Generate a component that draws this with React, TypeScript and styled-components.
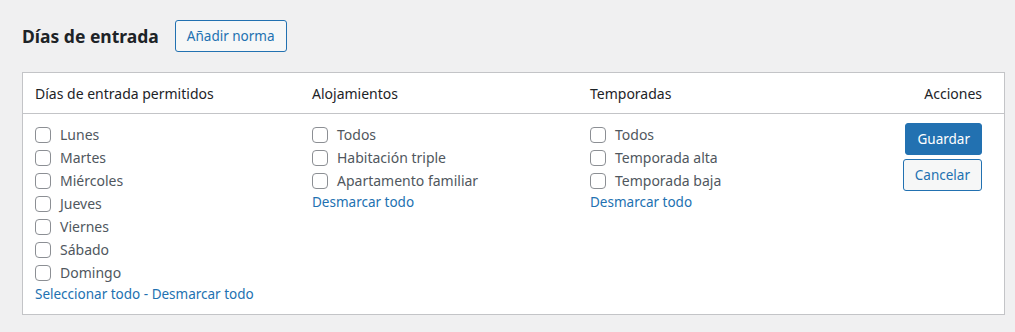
import React from "react";
import styled, { createGlobalStyle } from "styled-components";

const WP = {
  bg: "#f0f0f1",
  border: "#c3c4c7",
  blue: "#2271b1",
  text: "#1d2327",
  label: "#50575e",
  box: "#8c8f94",
  white: "#ffffff",
  light: "#f6f7f7",
};

const GlobalStyle = createGlobalStyle`
  html, body {
    margin: 0;
    background: ${WP.bg};
    font-family: "Noto Sans", "Open Sans", sans-serif;
    color: ${WP.text};
  }
`;

const Page = styled.div`
  padding: 20px 11px 0 22px;
`;

const TitleRow = styled.div`
  display: flex;
  align-items: center;
  gap: 16px;
  margin-bottom: 20px;
`;

const Title = styled.h2`
  margin: 0;
  font-size: 17.5px;
  font-weight: 700;
  color: ${WP.text};
`;

const Button = styled.button<{ $primary?: boolean }>`
  font-family: inherit;
  font-size: 13.5px;
  height: 32px;
  padding: 0 11px;
  border-radius: 3px;
  border: 1px solid ${WP.blue};
  background: ${(p) => (p.$primary ? WP.blue : WP.light)};
  color: ${(p) => (p.$primary ? WP.white : WP.blue)};
  cursor: pointer;
`;

const Table = styled.div`
  background: ${WP.white};
  border: 1px solid ${WP.border};
  box-sizing: border-box;
  width: 983px;
`;

const Row = styled.div<{ $head?: boolean }>`
  display: grid;
  grid-template-columns: 277px 278px 1fr 120px;
  padding: ${(p) => (p.$head ? "0 22px 0 12px" : "9px 22px 10px 12px")};
  height: ${(p) => (p.$head ? "40px" : "auto")};
  align-items: ${(p) => (p.$head ? "center" : "start")};
  border-bottom: ${(p) => (p.$head ? `1px solid ${WP.border}` : "none")};
`;

const HeadCell = styled.div<{ $right?: boolean }>`
  font-size: 14px;
  color: ${WP.text};
  text-align: ${(p) => (p.$right ? "right" : "left")};
`;

const Col = styled.div`
  display: flex;
  flex-direction: column;
`;

const Check = styled.label`
  display: flex;
  align-items: center;
  gap: 9px;
  height: 23px;
  font-size: 14px;
  color: ${WP.label};
`;

const Box = styled.span`
  width: 16px;
  height: 16px;
  box-sizing: border-box;
  border: 1px solid ${WP.box};
  border-radius: 4px;
  background: ${WP.white};
`;

const Links = styled.div`
  font-size: 13.5px;
  color: ${WP.blue};
  line-height: 20px;
  margin-top: 0;
`;

const Link = styled.a`
  color: ${WP.blue};
  text-decoration: none;
`;

const Actions = styled.div`
  display: flex;
  flex-direction: column;
  align-items: flex-end;
  gap: 4px;
`;

const CheckList = ({ items }: { items: string[] }) => (
  <>
    {items.map((i) => (
      <Check key={i}>
        <Box />
        {i}
      </Check>
    ))}
  </>
);

export default function App() {
  return (
    <Page>
      <GlobalStyle />
      <TitleRow>
        <Title>Días de entrada</Title>
        <Button>Añadir norma</Button>
      </TitleRow>
      <Table>
        <Row $head>
          <HeadCell>Días de entrada permitidos</HeadCell>
          <HeadCell>Alojamientos</HeadCell>
          <HeadCell>Temporadas</HeadCell>
          <HeadCell $right>Acciones</HeadCell>
        </Row>
        <Row>
          <Col>
            <CheckList items={["Lunes", "Martes", "Miércoles", "Jueves", "Viernes", "Sábado", "Domingo"]} />
            <Links>
              <Link href="#">Seleccionar todo</Link> - <Link href="#">Desmarcar todo</Link>
            </Links>
          </Col>
          <Col>
            <CheckList items={["Todos", "Habitación triple", "Apartamento familiar"]} />
            <Links>
              <Link href="#">Desmarcar todo</Link>
            </Links>
          </Col>
          <Col>
            <CheckList items={["Todos", "Temporada alta", "Temporada baja"]} />
            <Links>
              <Link href="#">Desmarcar todo</Link>
            </Links>
          </Col>
          <Actions>
            <Button $primary>Guardar</Button>
            <Button>Cancelar</Button>
          </Actions>
        </Row>
      </Table>
    </Page>
  );
}
